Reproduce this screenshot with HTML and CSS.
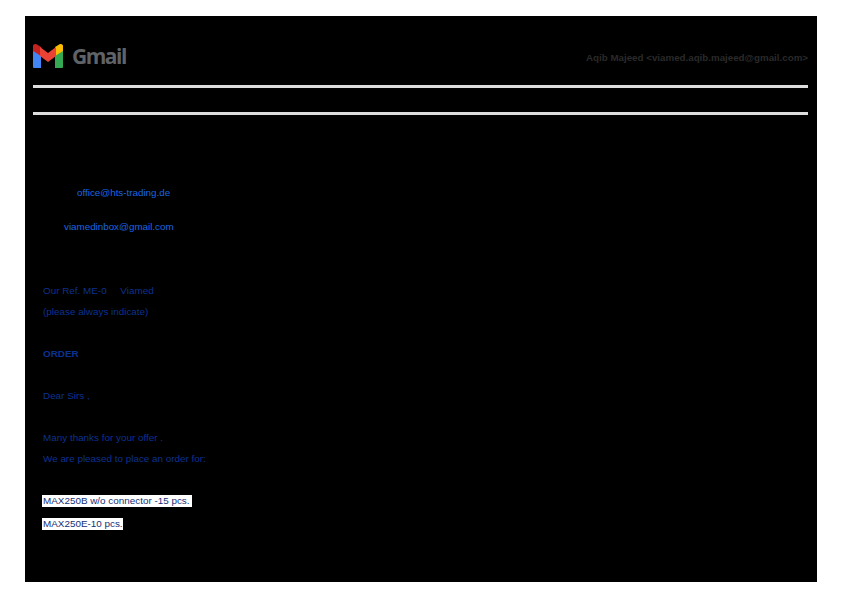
FILE: index.html
```html
<!DOCTYPE html>
<html lang="en">
<head>
<meta charset="utf-8">
<title>Gmail - ORDER</title>
<link rel="stylesheet" href="styles.css">
</head>
<body>
<main class="sheet">
  <header class="top">
    <div class="brand">
      <svg class="logo" viewBox="0 0 30 24" width="30" height="24" aria-hidden="true">
        <path fill="#4285f4" d="M0 7h8v17H1a1 1 0 0 1-1-1z"/>
        <path fill="#34a853" d="M22 7h8v16a1 1 0 0 1-1 1h-7z"/>
        <path fill="#c5221f" d="M0 2C0 .5 1.500 0 3 0L8 3V12L0 7z"/>
        <path fill="#fbbc04" d="M22 3 27 0C28.500 0 30 .5 30 2V7l-8 5z"/>
        <path fill="#ea4335" d="M7 3 15 9l8-6V12l-8 6-8-6z"/>
      </svg>
      <span class="wordmark">Gmail</span>
    </div>
    <div class="account">Aqib Majeed &lt;viamed.aqib.majeed@gmail.com&gt;</div>
  </header>
  <hr class="rule">
  <hr class="rule rule-second">
  <section class="addresses">
    <a class="mail mail-first">office@hts-trading.de</a>
    <a class="mail mail-second">viamedinbox@gmail.com</a>
  </section>
  <section class="body-text">
    <p class="line">Our Ref. ME-0 &nbsp; &nbsp; Viamed</p>
    <p class="line">(please always indicate)</p>
    <p class="line gap"><strong>ORDER</strong></p>
    <p class="line gap">Dear Sirs ,</p>
    <p class="line gap">Many thanks for your offer .</p>
    <p class="line">We are pleased to place an order for:</p>
    <p class="line gap item"><span class="hl">MAX250B w/o connector -15 pcs.</span></p>
    <p class="line item item-second"><span class="hl hl-short">MAX250E-10 pcs.</span></p>
  </section>
</main>
</body>
</html>
```
FILE: styles.css
```css
html, body {
  margin: 0;
  padding: 0;
  background: #fff;
}
body {
  width: 842px;
  height: 595px;
  overflow: hidden;
  font-family: "Liberation Sans", Arial, sans-serif;
}
.sheet {
  box-sizing: border-box;
  width: 792px;
  height: 566px;
  margin: 16px 0 0 25px;
  padding: 28px 9px 0 8px;
  background: #000;
}
.top {
  display: flex;
  justify-content: space-between;
  align-items: center;
  height: 24px;
}
.brand {
  display: flex;
  align-items: center;
  gap: 9px;
}
.logo { display: block; }
.wordmark {
  font-family: "Open Sans", sans-serif;
  font-size: 21px;
  font-weight: 700;
  letter-spacing: -1.500px;
  color: #5f6368;
  line-height: 24px;
}
.account {
  font-size: 9.750px;
  line-height: 12px;
  padding-top: 4px;
  font-weight: 700;
  color: #2a2a2a;
}
.rule {
  height: 3px;
  margin: 17px 0 0;
  border: 0;
  background: #ddd;
}
.rule-second { margin-top: 24px; }
.addresses {
  display: flex;
  flex-direction: column;
  align-items: flex-start;
  padding-top: 71px;
  font-size: 9.800px;
  line-height: 14px;
  color: #1a66e0;
}
.mail-first { margin-left: 44px; }
.mail-second { margin-left: 31px; margin-top: 20px; }
.body-text {
  padding: 46px 0 0 10px;
  font-size: 9.900px;
  line-height: 21px;
  color: #0c3290;
}
.line { margin: 0; white-space: pre-wrap; }
.gap { margin-top: 21px; }
.hl {
  display: inline-block;
  margin-left: -1px;
  padding: 0 2px 0 1px;
  line-height: 12px;
  background: #fff;
  color: #142f78;
}
.hl-short { padding-right: 0; }
.item-second { margin-top: 2px; }
```
